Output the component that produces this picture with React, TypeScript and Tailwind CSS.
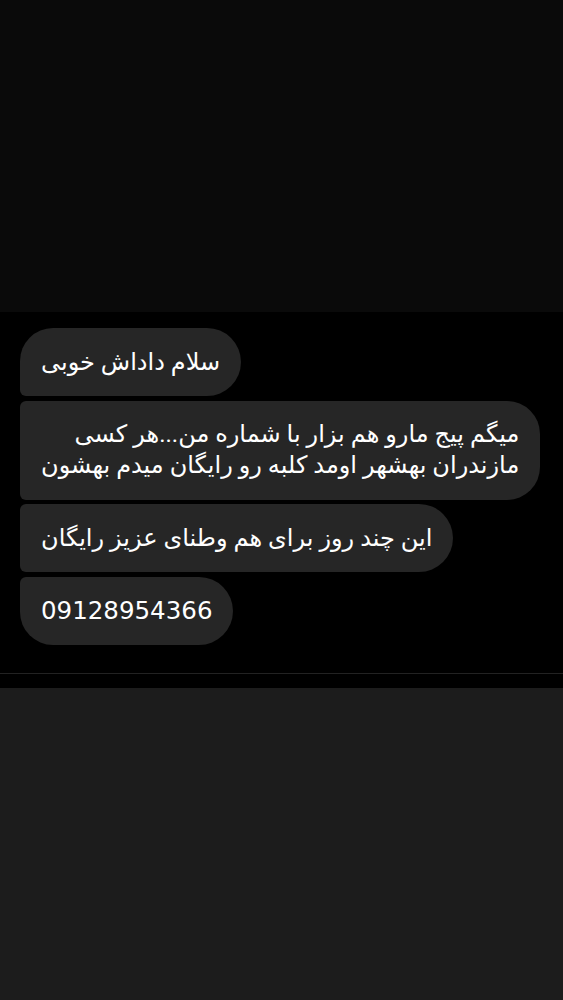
import React from "react";

const font = { fontFamily: '"Roboto", "DejaVu Sans", sans-serif' };
const digitFont = { fontFamily: '"DejaVu Sans", sans-serif' };

export default function App() {
  return (
    <div className="w-[563px] h-[1000px] flex flex-col bg-black" style={font}>
      <div className="h-[312px] bg-[#0a0a0a]" />
      <div className="bg-black pt-[16px] pb-[28.5px] px-[20px] flex flex-col items-start gap-[4.5px]">
        <div dir="rtl" className="bg-[#262626] text-white text-[24px] leading-[31px] px-[21px] py-[18.5px] rounded-tl-[33px] rounded-bl-[6px] rounded-r-[34px]">
          سلام داداش خوبی
        </div>
        <div dir="rtl" className="bg-[#262626] text-white text-[24px] leading-[31px] px-[21px] py-[18.5px] rounded-l-[6px] rounded-r-[33px]">
          میگم پیج مارو هم بزار با شماره من...هر کسی
          <br />
          مازندران بهشهر اومد کلبه رو رایگان میدم بهشون
        </div>
        <div dir="rtl" className="bg-[#262626] text-white text-[24px] leading-[31px] px-[21px] py-[18.5px] rounded-l-[6px] rounded-r-[34px]">
          این چند روز برای هم وطنای عزیز رایگان
        </div>
        <div className="bg-[#262626] text-white text-[24.5px] leading-[31px] px-[21px] py-[18.5px] rounded-tl-[6px] rounded-bl-[33px] rounded-r-[34px]" style={digitFont}>
          09128954366
        </div>
      </div>
      <div className="h-[1px] bg-[#222222]" />
      <div className="h-[14px] bg-black" />
      <div className="flex-1 bg-[#1c1c1c]" />
    </div>
  );
}
